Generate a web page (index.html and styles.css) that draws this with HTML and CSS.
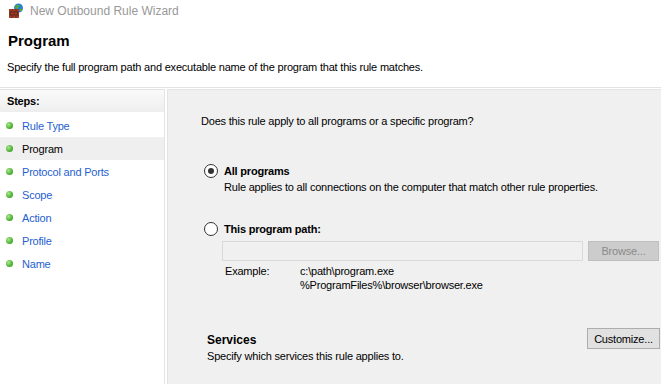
FILE: index.html
```html
<!DOCTYPE html>
<html>
<head>
    <title>New Outbound Rule Wizard</title>
    <link rel="stylesheet" href="styles.css">
</head>
<body>
    <div class="titlebar">
        <svg class="app-icon" width="16" height="16" viewBox="0 0 16 16">
            <circle cx="10.5" cy="5" r="4.5" fill="#2d7fd6"/>
            <path d="M7 3 Q9 1 11 2 Q12 4 10 5 Q9 7 8 6 Z M12 6 Q14 5 14.5 7 Q13 9 12 8 Z" fill="#4cae3a"/>
            <rect x="1" y="6" width="10" height="9" fill="#a0402a"/>
            <path d="M1 9 H11 M1 12 H11 M4 6 V9 M8 6 V9 M2.5 9 V12 M6 9 V12 M9.5 9 V12 M4 12 V15 M8 12 V15" stroke="#6b2516" stroke-width="1"/>
        </svg>
        <span class="window-title">New Outbound Rule Wizard</span>
    </div>

    <div class="header">
        <h1>Program</h1>
        <p>Specify the full program path and executable name of the program that this rule matches.</p>
    </div>

    <div class="wizard">
        <div class="steps">
            <div class="steps-title">Steps:</div>
            <ul class="step-list">
                <li><span class="dot"></span><a href="#">Rule Type</a></li>
                <li class="current"><span class="dot"></span><span>Program</span></li>
                <li><span class="dot"></span><a href="#">Protocol and Ports</a></li>
                <li><span class="dot"></span><a href="#">Scope</a></li>
                <li><span class="dot"></span><a href="#">Action</a></li>
                <li><span class="dot"></span><a href="#">Profile</a></li>
                <li><span class="dot"></span><a href="#">Name</a></li>
            </ul>
        </div>

        <div class="content">
            <p class="question">Does this rule apply to all programs or a specific program?</p>

            <label class="radio-row"><span class="radio checked"></span><b>All programs</b></label>
            <div class="option-desc">Rule applies to all connections on the computer that match other rule properties.</div>

            <label class="radio-row radio-path"><span class="radio"></span><b>This program path:</b></label>
            <div class="path-row">
                <input class="path-input" type="text" disabled>
                <button class="btn" disabled>Browse...</button>
            </div>
            <div class="example">
                <span class="example-label">Example:</span>
                <span>c:\path\program.exe<br>%ProgramFiles%\browser\browser.exe</span>
            </div>

            <div class="services">
                <div>
                    <div class="services-title">Services</div>
                    <div>Specify which services this rule applies to.</div>
                </div>
                <button class="btn">Customize...</button>
            </div>
        </div>
    </div>
</body>
</html>
```

FILE: styles.css
```css
body {
    margin: 0;
    padding: 0;
    font-family: "Liberation Sans", Arial, sans-serif;
    font-size: 11px;
    line-height: 14px;
    letter-spacing: -0.2px;
    color: #000;
    background-color: #fff;
    width: 661px;
    height: 384px;
    overflow: hidden;
}
.titlebar {
    display: flex;
    align-items: center;
    height: 22px;
    padding-left: 8px;
}
.app-icon {
    margin-right: 6px;
}
.window-title {
    color: #999;
    font-size: 12px;
    letter-spacing: 0;
}
.header {
    padding: 10px 0 0 7px;
    height: 55px;
    border-bottom: 1px solid #e3e3e3;
}
.header h1 {
    margin: 0 0 0 1px;
    font-size: 15px;
    line-height: 18px;
    letter-spacing: 0;
    font-weight: bold;
}
.header p {
    margin: 10px 0 0 0;
}
.wizard {
    display: flex;
    height: 296px;
    padding-top: 1px;
}
.steps {
    flex-shrink: 0;
    width: 164px;
    border-top: 1px solid #e3e3e3;
    border-right: 1px solid #e3e3e3;
    margin-right: 2px;
}
.steps-title {
    height: 22px;
    line-height: 22px;
    padding-left: 7px;
    font-weight: bold;
    background: linear-gradient(#fafafa, #eeeeee);
}
.step-list {
    list-style: none;
    margin: 0;
    padding: 2px 0 0 0;
}
.step-list li {
    display: flex;
    align-items: center;
    height: 23px;
    padding-left: 6px;
}
.step-list li.current {
    background-color: #efefef;
}
.step-list a {
    color: #1f5fcf;
    text-decoration: none;
}
.dot {
    width: 7px;
    height: 7px;
    border-radius: 50%;
    margin-right: 9px;
    background: radial-gradient(circle at 35% 35%, #a8e88a, #3fa828 70%);
}
.content {
    flex: 1;
    min-width: 0;
    background-color: #f0f0f0;
    border-top: 1px solid #e3e3e3;
    border-left: 1px solid #e3e3e3;
    padding: 24px 1px 0 0;
}
.question {
    margin: 0 0 36px 33px;
}
.radio-row {
    display: flex;
    align-items: center;
    height: 14px;
    margin-left: 36px;
}
.radio-row b {
    font-weight: bold;
}
.radio {
    width: 12px;
    height: 12px;
    border: 1px solid #333;
    border-radius: 50%;
    background: #fff;
    margin-right: 6px;
    position: relative;
}
.radio.checked::after {
    content: "";
    position: absolute;
    left: 3px;
    top: 3px;
    width: 6px;
    height: 6px;
    border-radius: 50%;
    background: #333;
}
.option-desc {
    margin: 2px 0 0 56px;
}
.radio-path {
    margin-top: 28px;
}
.path-row {
    display: flex;
    margin: 5px 0 0 54px;
}
.path-input {
    width: 361px;
    height: 20px;
    box-sizing: border-box;
    border: 1px solid #d9d9d9;
    background: #f0f0f0;
    margin: 0 5px 0 0;
    padding: 0;
}
.btn {
    width: 73px;
    height: 21px;
    font-family: inherit;
    font-size: 11px;
    letter-spacing: -0.2px;
    border: 1px solid #adadad;
    background: #e1e1e1;
    color: #000;
    padding: 0;
}
.btn:disabled {
    border-color: #bfbfbf;
    background: #cccccc;
    color: #8a8a8a;
}
.path-row .btn {
    width: 71px;
    height: 20px;
}
.example {
    display: flex;
    margin: 3px 0 0 57px;
}
.example-label {
    width: 75px;
}
.services {
    display: flex;
    justify-content: space-between;
    align-items: flex-start;
    margin: 41px 0 0 39px;
}
.services-title {
    font-weight: bold;
    font-size: 12px;
    line-height: 15px;
    letter-spacing: 0;
    margin-bottom: 1px;
}
.services .btn {
    margin-top: -5px;
}
```
